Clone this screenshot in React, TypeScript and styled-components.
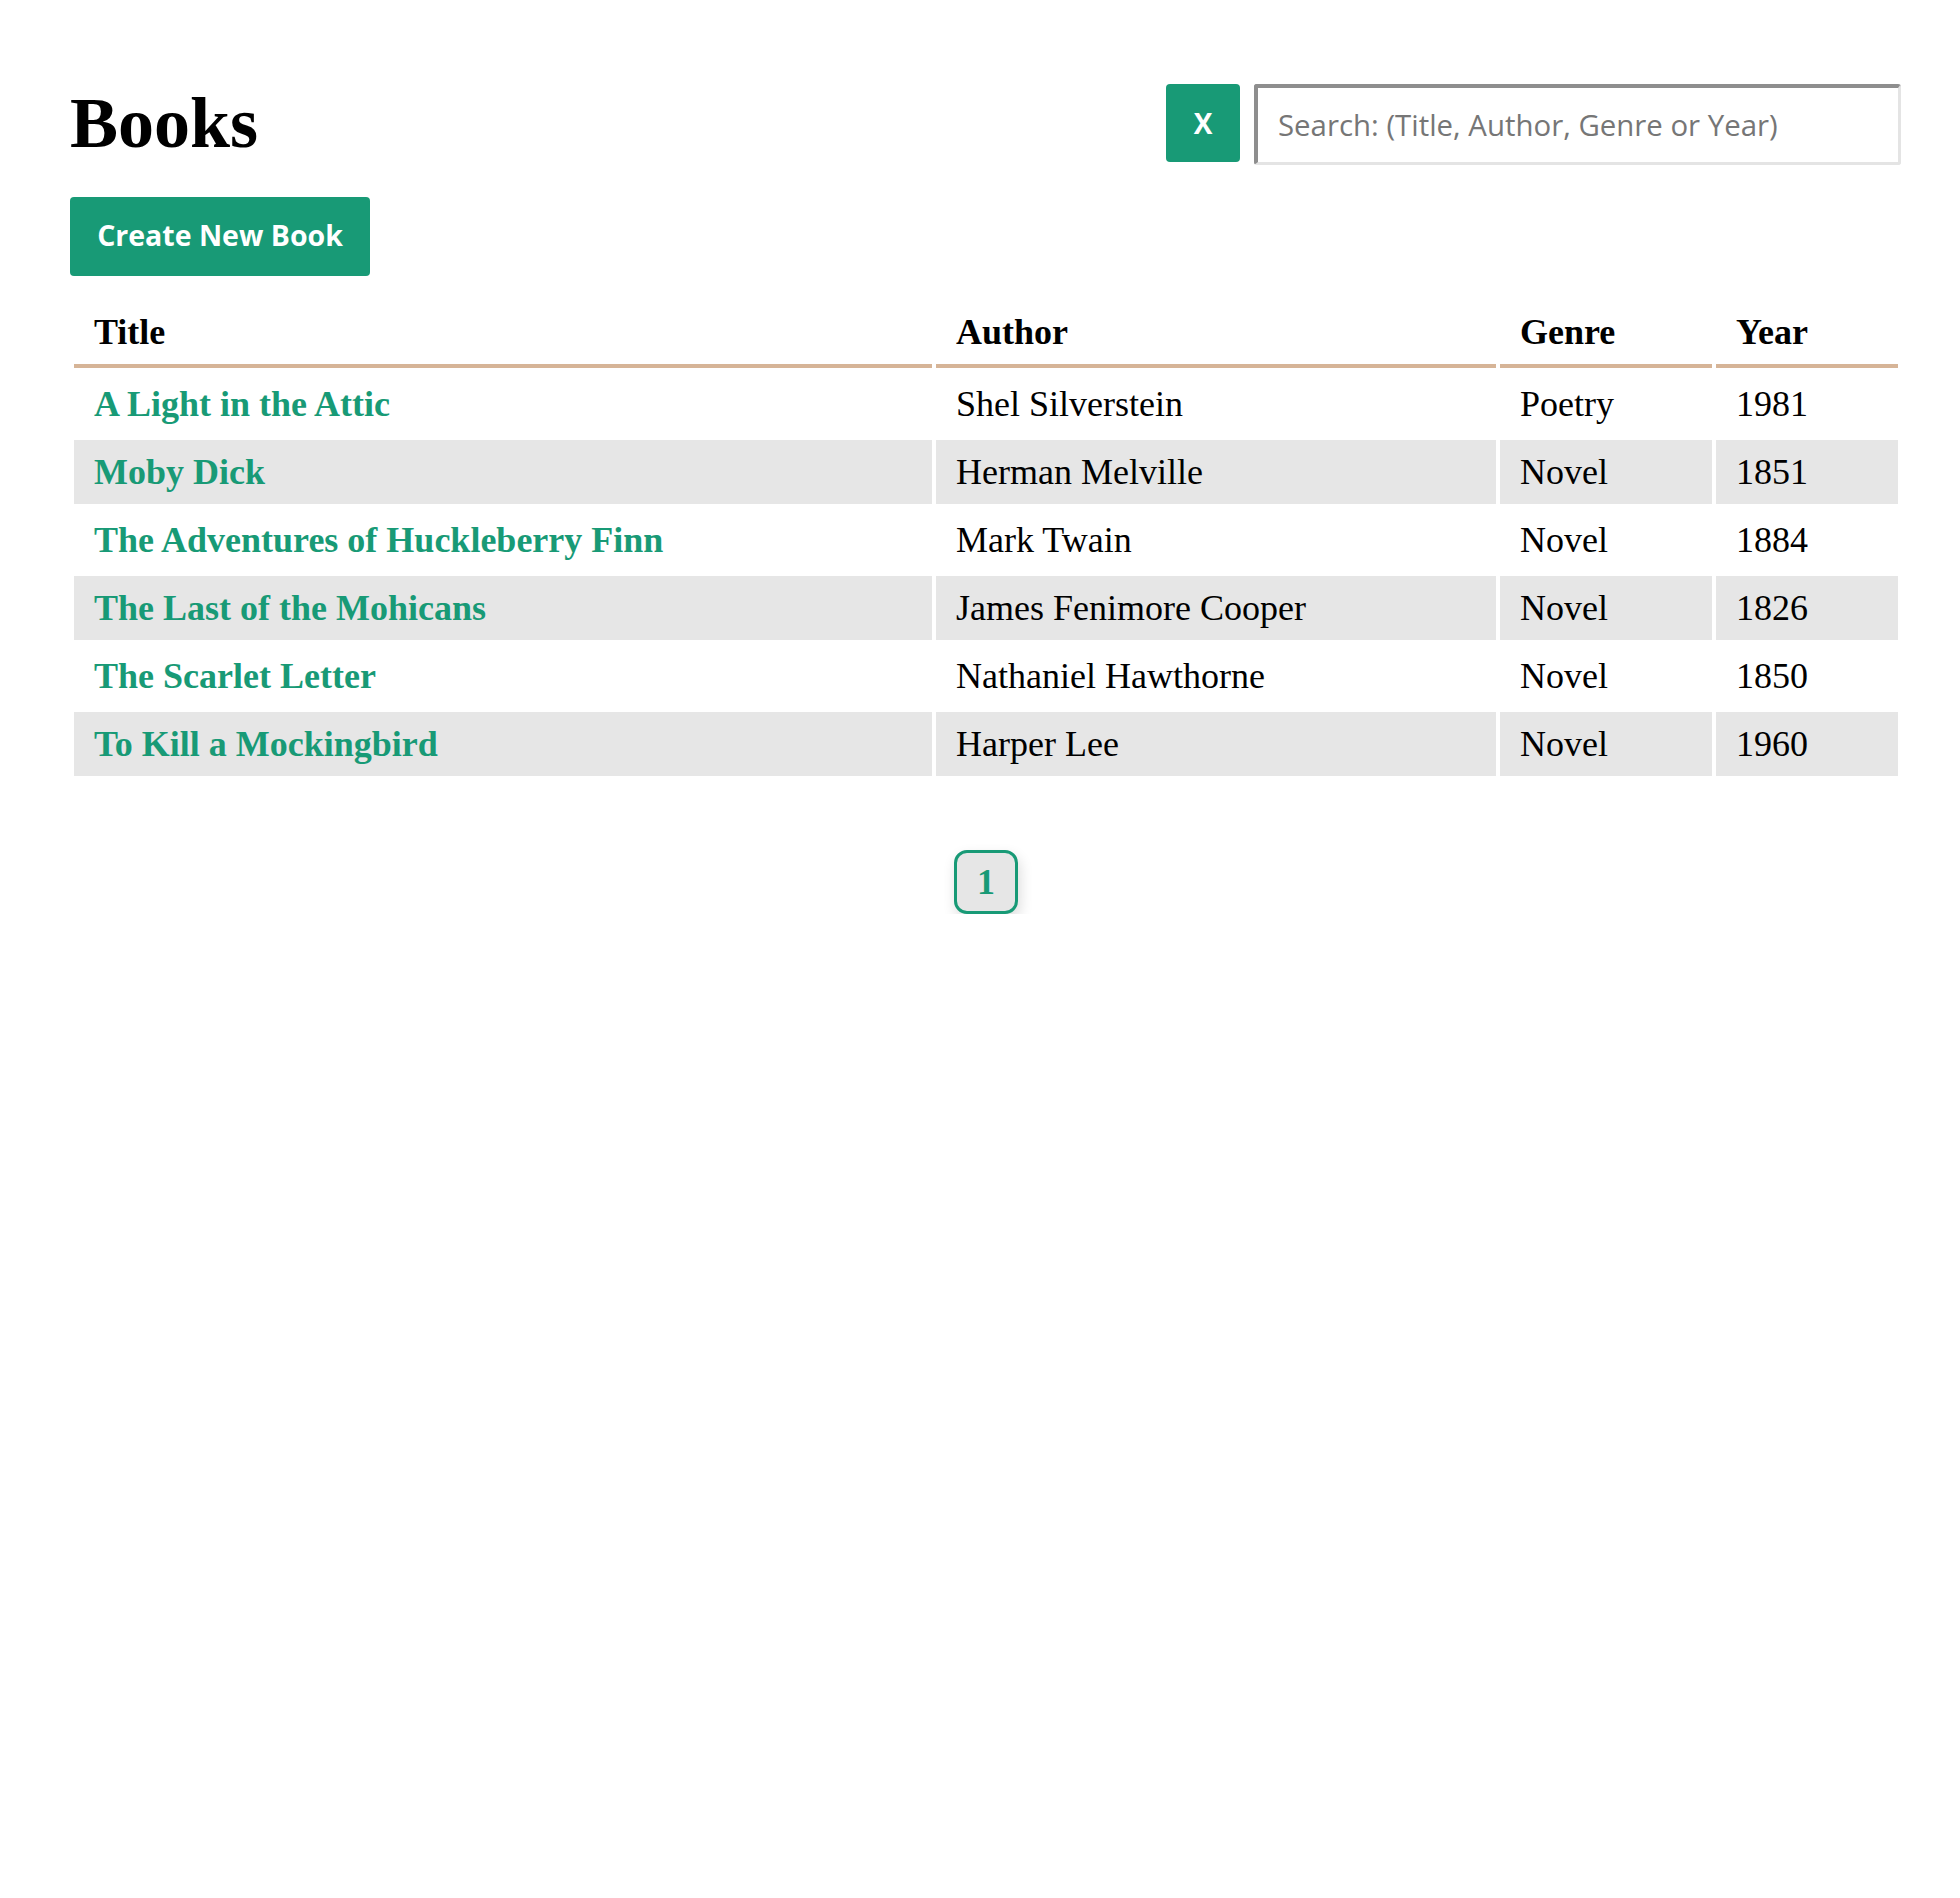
import React, { useState } from 'react';
import styled, { createGlobalStyle } from 'styled-components';

const GREEN = '#189a76';

type Book = { title: string; author: string; genre: string; year: number };

const books: Book[] = [
  { title: 'A Light in the Attic', author: 'Shel Silverstein', genre: 'Poetry', year: 1981 },
  { title: 'Moby Dick', author: 'Herman Melville', genre: 'Novel', year: 1851 },
  { title: 'The Adventures of Huckleberry Finn', author: 'Mark Twain', genre: 'Novel', year: 1884 },
  { title: 'The Last of the Mohicans', author: 'James Fenimore Cooper', genre: 'Novel', year: 1826 },
  { title: 'The Scarlet Letter', author: 'Nathaniel Hawthorne', genre: 'Novel', year: 1850 },
  { title: 'To Kill a Mockingbird', author: 'Harper Lee', genre: 'Novel', year: 1960 },
];

const columns = [
  { label: 'Title', width: 858 },
  { label: 'Author', width: 560 },
  { label: 'Genre', width: 212 },
  { label: 'Year', width: 182 },
];

const App = () => {
  const [query, setQuery] = useState('');

  return (
    <Page>
      <GlobalStyle />
      <TopBar>
        <Heading>Books</Heading>
        <SearchForm>
          <ClearBtn type="button" onClick={() => setQuery('')}>
            X
          </ClearBtn>
          <SearchInput
            value={query}
            onChange={(e) => setQuery(e.target.value)}
            placeholder="Search: (Title, Author, Genre or Year)"
          />
        </SearchForm>
      </TopBar>

      <CreateBtn type="button">Create New Book</CreateBtn>

      <BookTable>
        <thead>
          <tr>
            {columns.map((col) => (
              <HeadCell key={col.label} $width={col.width}>
                {col.label}
              </HeadCell>
            ))}
          </tr>
        </thead>
        <tbody>
          {books.map((book, i) => (
            <tr key={book.title}>
              <Cell $striped={i % 2 === 1}>
                <TitleLink href="#">{book.title}</TitleLink>
              </Cell>
              <Cell $striped={i % 2 === 1}>{book.author}</Cell>
              <Cell $striped={i % 2 === 1}>{book.genre}</Cell>
              <Cell $striped={i % 2 === 1}>{book.year}</Cell>
            </tr>
          ))}
        </tbody>
      </BookTable>

      <Pagination>
        <PageBtn type="button">1</PageBtn>
      </Pagination>
    </Page>
  );
};

export default App;

const GlobalStyle = createGlobalStyle`
  body {
    margin: 0;
    background: #ffffff;
    font-family: "Liberation Serif", "Times New Roman", serif;
    color: #000;
  }
`;

const Page = styled.div`
  width: 1832px;
  padding: 82px 0 0 70px;
  display: flex;
  flex-direction: column;
  align-items: flex-start;
`;

const TopBar = styled.div`
  width: 100%;
  display: flex;
  justify-content: space-between;
  align-items: flex-start;
`;

const Heading = styled.h1`
  margin: 0;
  font-size: 72px;
  line-height: 82px;
  font-weight: 700;
`;

const SearchForm = styled.form`
  display: flex;
  align-items: flex-start;
  gap: 14px;
  margin-top: 2px;
  margin-right: 1px;
`;

const ClearBtn = styled.button`
  width: 74px;
  height: 78px;
  border: none;
  border-radius: 4px;
  background-color: ${GREEN};
  color: #fff;
  font-family: "Open Sans", sans-serif;
  font-weight: 700;
  font-size: 28px;
  cursor: pointer;
`;

const SearchInput = styled.input`
  box-sizing: border-box;
  width: 647px;
  height: 81px;
  padding: 0 20px;
  border-style: solid;
  border-width: 4px 3px 3px 4px;
  border-color: #8e8e8e #e4e4e4 #e4e4e4 #8e8e8e;
  border-radius: 3px;
  font-family: "Open Sans", sans-serif;
  font-size: 29.4px;
  color: #333;
  outline: none;
  &::placeholder {
    color: #767676;
  }
`;

const CreateBtn = styled.button`
  margin-top: 32px;
  width: 300px;
  height: 79px;
  padding: 0 0 3px;
  border: none;
  border-radius: 4px;
  background-color: ${GREEN};
  color: #fff;
  font-family: "Open Sans", sans-serif;
  font-weight: 700;
  font-size: 28.5px;
  cursor: pointer;
`;

const BookTable = styled.table`
  margin-top: 20px;
  width: 1832px;
  table-layout: fixed;
  border-collapse: separate;
  border-spacing: 4px;
  font-size: 36px;
`;

const HeadCell = styled.th<{ $width: number }>`
  box-sizing: border-box;
  width: ${(p) => p.$width}px;
  padding: 11px 20px;
  line-height: 42px;
  text-align: left;
  font-weight: 700;
  border-bottom: 4px solid #d6b497;
`;

const Cell = styled.td<{ $striped: boolean }>`
  padding: 11px 20px;
  line-height: 42px;
  background-color: ${(p) => (p.$striped ? '#e6e6e6' : 'transparent')};
  white-space: nowrap;
`;

const TitleLink = styled.a`
  color: ${GREEN};
  font-weight: 700;
  text-decoration: none;
`;

const Pagination = styled.div`
  width: 100%;
  display: flex;
  justify-content: center;
  margin-top: 70px;
`;

const PageBtn = styled.button`
  width: 64px;
  height: 64px;
  border: 3px solid ${GREEN};
  border-radius: 13px;
  background-color: #e6e6e6;
  color: ${GREEN};
  font-family: "Liberation Serif", serif;
  font-weight: 700;
  font-size: 36px;
  padding: 0;
  box-shadow: 2px 6px 14px rgba(0, 0, 0, 0.14);
  cursor: pointer;
`;
